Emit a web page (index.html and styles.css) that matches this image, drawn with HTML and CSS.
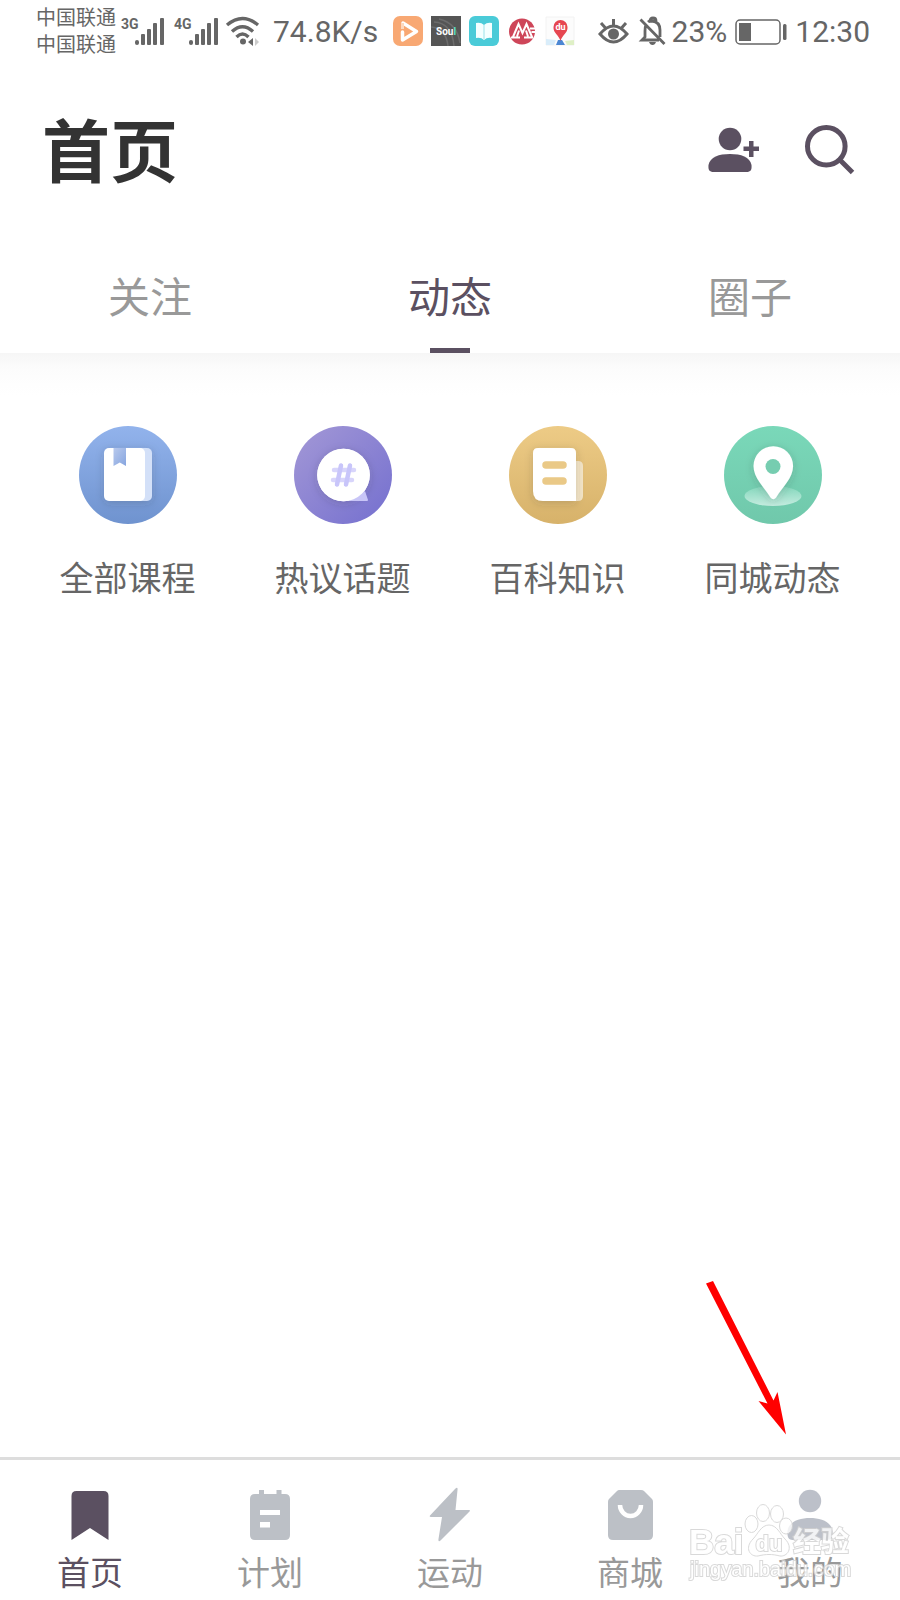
FILE: index.html
```html
<!DOCTYPE html>
<html lang="zh-CN">
<head>
<meta charset="utf-8">
<meta name="viewport" content="width=device-width, initial-scale=1">
<title>首页</title>
<link rel="stylesheet" href="styles.css">
</head>
<body>
<div class="app">
  <div class="status">
    <div class="status-group">
      <div class="carriers"><span>中国联通</span><span>中国联通</span></div>
      <svg class="signal" width="46" height="32" viewBox="0 0 46 32" fill="#666">
        <text class="net" x="0" y="13">3G</text>
        <rect x="14" y="24" width="4" height="5" rx="2"/><rect x="20" y="18" width="4" height="11" rx="1"/><rect x="26" y="13" width="4" height="16" rx="1"/><rect x="32" y="7" width="4" height="22" rx="1"/><rect x="39" y="2" width="4" height="27" rx="1"/>
      </svg>
      <svg class="signal" width="46" height="32" viewBox="0 0 46 32" fill="#666">
        <text class="net" x="0" y="13">4G</text>
        <rect x="15" y="24" width="4" height="5" rx="2"/><rect x="21" y="18" width="4" height="11" rx="1"/><rect x="27" y="13" width="4" height="16" rx="1"/><rect x="33" y="7" width="4" height="22" rx="1"/><rect x="40" y="2" width="4" height="27" rx="1"/>
      </svg>
      <svg width="34" height="32" viewBox="0 0 34 32" fill="none" stroke="#666" stroke-width="3.4">
        <path d="M0 9Q15.500 -4 31 9M5 15.500Q15.500 6 26 15.500M9.500 21Q15.500 15 21.500 21"/>
        <circle cx="16" cy="25.500" r="3" fill="#666" stroke="none"/>
        <path d="M21 26l5-4v8z" fill="#666" stroke="none"/><path d="M28 22l4 4-4 4z" fill="#ccc" stroke="none"/>
      </svg>
    </div>
    <span class="status-text">74.8K/s</span>
    <div class="apps">
      <svg width="30" height="30" viewBox="0 0 30 30"><rect width="30" height="30" rx="7" fill="#f8a873"/><path d="M9.500 16v8l14-8.500L10 7" fill="none" stroke="#fff" stroke-width="3.500" stroke-linejoin="round" stroke-linecap="round"/><path d="M9.500 7v6" stroke="#fdd9bf" stroke-width="3"/></svg>
      <svg width="30" height="30" viewBox="0 0 30 30"><rect width="30" height="30" fill="#555"/><path d="M3 6q18 1 20 24M8 3q18 4 21 24M0 11q15 1 17 19" fill="none" stroke="#6c6c6c" stroke-width="1.500"/><text class="soul" x="5" y="19">Sou<tspan fill="#55e0c5">l</tspan></text></svg>
      <svg width="30" height="30" viewBox="0 0 30 30"><rect width="30" height="30" rx="6" fill="#4acbd8"/><path d="M7 7q5-1 8 2 3-3 8-2v15q-5-1-8 2-3-3-8-2z" fill="#f4ffff"/><path d="M15 9v14" stroke="#9be2e9"/></svg>
      <svg width="30" height="30" viewBox="0 0 30 30"><circle cx="15" cy="15.500" r="13" fill="#ce4659"/><path d="M6 21L11.500 8l4 9 4-9L25 21M10 20.500l2-6M21 20.500l-2-6M4 21.500h9M17 21.500h9M23 12.500h5M24.500 16h4" fill="none" stroke="#fff" stroke-width="2"/></svg>
      <svg width="30" height="30" viewBox="0 0 30 30"><path d="M1 1h28v28H1z" fill="#fcfcfc" stroke="#f2f2f2"/><path d="M1 23l10 1-2 5H1z" fill="#d9edfa"/><path d="M20 25l9-1v5h-7z" fill="#dff0c6"/><path d="M11 29l2-5h4l3 5z" fill="#4b87d3"/><path d="M15.500 25C14 19 8 17 8.500 11a7 7 0 0 1 14 0c.5 6-5.500 8-7 14z" fill="#e64650"/><text class="du-mini" x="15.500" y="14" text-anchor="middle">du</text></svg>
    </div>
    <div class="status-right">
      <svg class="eye" width="31" height="30" viewBox="0 0 31 30" fill="none" stroke="#666" stroke-width="3"><path d="M2 17Q15.500 1 29 17 15.500 33 2 17zM15.500 8V2M7.500 11L3 6M23.500 11L28 6"/><circle cx="15.500" cy="17" r="5.500" fill="#666" stroke="none"/></svg>
      <svg width="27" height="30" viewBox="0 0 27 30" fill="none" stroke="#666" stroke-width="2.800"><path d="M1.500 2.500L25.500 27M7 8q-1 2-1 6v6l-3 3h17M9 5q1-1 4-1 8 1 8 9v7M11 4q0-3 3-3t3 3"/><path d="M10 25h7q-1 3-3.500 3T10 25z" fill="#666" stroke="none"/></svg>
      <span class="status-text">23%</span>
      <svg class="battery" width="52" height="26" viewBox="0 0 52 26"><rect x="1" y="1" width="44" height="24" rx="4" fill="none" stroke="#666" stroke-width="1.500"/><rect x="4" y="4" width="12" height="18" fill="#666"/><rect x="48" y="5" width="3.500" height="16" rx="1.500" fill="#666"/></svg>
      <span class="status-text">12:30</span>
    </div>
  </div>

  <header class="header">
    <h1 class="title">首页</h1>
    <div class="actions">
      <button class="icon-btn" aria-label="添加好友"><svg width="52" height="50" viewBox="0 0 52 50" fill="#5b5061"><circle cx="22" cy="13" r="11.300"/><path d="M0.500 39C2 31 11 28 22 28s20 3 21.500 11c.5 5-1 7-5 7h-33c-4 0-5.500-2-5-7z"/><path d="M41 15h4.500v5.500h5.500V25h-5.500v6H41v-6h-5.500v-4.500H41z"/></svg></button>
      <button class="icon-btn" aria-label="搜索"><svg width="50" height="50" viewBox="0 0 50 50" fill="none" stroke="#5b5061"><circle cx="21.300" cy="20.300" r="18.800" stroke-width="5"/><path d="M34.500 33.500L47.500 46.500" stroke-width="5"/></svg></button>
    </div>
  </header>

  <nav class="tabs">
    <a class="tab" href="#follow">关注</a>
    <a class="tab active" href="#feed">动态</a>
    <a class="tab" href="#circle">圈子</a>
  </nav>

  <main class="content">
    <div class="shortcuts">
      <a class="shortcut" href="#courses">
        <svg width="98" height="98" viewBox="0 0 98 98">
          <defs><linearGradient id="blue" x2="0" y2="1"><stop stop-color="#92b3ec"/><stop offset="1" stop-color="#6f93cf"/></linearGradient><linearGradient id="ribbon" x2="1" y2="1"><stop stop-color="#b8c9ed"/><stop offset="1" stop-color="#86a5df"/></linearGradient><filter id="soft" x="-30%" y="-30%" width="160%" height="160%"><feDropShadow dx="0" dy="2" stdDeviation="4" flood-color="#333" flood-opacity=".2"/></filter></defs>
          <circle cx="49" cy="49" r="49" fill="url(#blue)"/>
          <g filter="url(#soft)"><rect x="40" y="22" width="33" height="53" rx="5" fill="#d3e0f8"/><rect x="25" y="22" width="41" height="53" rx="5" fill="#fff"/></g>
          <path d="M34.500 22h12.500v18l-6.200-3.500-6.300 3.500z" fill="url(#ribbon)"/>
        </svg><span>全部课程</span></a>
      <a class="shortcut" href="#topics">
        <svg width="98" height="98" viewBox="0 0 98 98">
          <defs><linearGradient id="violet" x2="1" y2="1"><stop stop-color="#a398d6"/><stop offset="1" stop-color="#746fcf"/></linearGradient></defs>
          <circle cx="49" cy="49" r="49" fill="url(#violet)"/>
          <circle cx="49.500" cy="49" r="26.300" fill="#fff" filter="url(#soft)"/><path d="M55 74.500L71 65l3 9q0 1-1 1H56z" fill="#c8c5f7"/><circle cx="49.500" cy="49" r="26.300" fill="#fff"/>
          <g fill="none" stroke-width="4.500" stroke-linecap="round"><path d="M40 44h20M39 54h19" stroke="#d8d5fb"/><path d="M47 39.500l-4 19M56 39.500l-4 19" stroke="#c8c5fa"/></g>
        </svg><span>热议话题</span></a>
      <a class="shortcut" href="#wiki">
        <svg width="98" height="98" viewBox="0 0 98 98">
          <defs><linearGradient id="gold" x2="0" y2="1"><stop stop-color="#edcb86"/><stop offset="1" stop-color="#d7b26a"/></linearGradient></defs>
          <circle cx="49" cy="49" r="49" fill="url(#gold)"/>
          <path d="M62 35h7q5 0 5 5v30q0 5-5 5h-7z" fill="#f3e4c6"/>
          <path d="M29 22h33q5 0 5 5v48H34q-10 0-10-10V27q0-5 5-5z" fill="#fff" filter="url(#soft)"/>
          <path d="M37 39h17M37 55h17" stroke="#eac987" stroke-width="7.500" stroke-linecap="round"/>
        </svg><span>百科知识</span></a>
      <a class="shortcut" href="#nearby">
        <svg width="98" height="98" viewBox="0 0 98 98">
          <defs><linearGradient id="green" x2="0" y2="1"><stop stop-color="#7ad8b9"/><stop offset="1" stop-color="#70c8ab"/></linearGradient><linearGradient id="pool" x2="0" y2="1"><stop stop-color="#84d7bc"/><stop offset="1" stop-color="#c4ecdf"/></linearGradient></defs>
          <circle cx="49" cy="49" r="49" fill="url(#green)"/>
          <ellipse cx="49" cy="70" rx="28.500" ry="10" fill="url(#pool)"/>
          <path d="M46.500 71.500C40 61 29.500 52 29.500 40a19.800 19.800 0 0 1 39.600 0c0 12-10.500 21-17 31.500q-2.800 3.500-5.600 0z" fill="#fff" filter="url(#soft)"/><circle cx="49" cy="40.500" r="7.500" fill="#76cdb0"/>
        </svg><span>同城动态</span></a>
    </div>
    <svg class="arrow" width="90" height="160" viewBox="0 0 90 160" fill="#f00"><path d="M7 2.500L14 0 74.500 119.500l4-8.500 8.500 42.500-27.500-33.500 9 2.500z"/></svg>
  </main>

  <nav class="bottom">
    <a class="item active" href="#home"><svg width="52" height="52" viewBox="0 0 52 52"><path d="M7.500 50V6q0-5 5-5h27q5 0 5 5v44L26 38z" fill="#5b5061"/></svg><span>首页</span></a>
    <a class="item" href="#plan"><svg width="52" height="52" viewBox="0 0 52 52"><path d="M15 0h5v4h12.500V0h5v4h3.500q5 0 5 5v36q0 5-5 5H11q-5 0-5-5V9q0-5 5-5h4z" fill="#bcc0c6"/><path d="M16 20h20v5H16zM16 32h10v5.500H16z" fill="#fff"/></svg><span>计划</span></a>
    <a class="item" href="#sport"><svg width="52" height="52" viewBox="0 0 52 52"><path d="M31-1q3-3 2.500 1l-2 20H45q2 0 0 2L17 50q-3 3-2.500-1l3.500-22H7q-2 0-1-1.500z" fill="#bcc0c6"/></svg><span>运动</span></a>
    <a class="item" href="#mall"><svg width="52" height="52" viewBox="0 0 52 52"><path d="M15 0h22q2 0 3 1l8 8q1 1 1 3v33q0 5-5 5H9q-5 0-5-5V12q0-2 1-3l8-8q1-1 2-1z" fill="#bcc0c6"/><path d="M16 15a10.500 11 0 0 0 21 0" fill="none" stroke="#fff" stroke-width="4.500"/></svg><span>商城</span></a>
    <a class="item" href="#mine"><svg width="52" height="52" viewBox="0 0 52 52" fill="#bcc0c9"><circle cx="26" cy="11" r="11.200"/><path d="M3.500 41C5 31 16 28 26 28s21 3 22.500 13c.5 6-1 9-5 9h-35c-4 0-5.500-3-5-9z"/></svg><span>我的</span></a>
    <svg class="mark" width="168" height="84" viewBox="0 0 168 84" fill="#fff" stroke="#d0d0d0">
      <g><ellipse cx="63.500" cy="23" rx="6.500" ry="8.500"/><ellipse cx="75" cy="12" rx="6.500" ry="8.500"/><ellipse cx="89" cy="13" rx="6.500" ry="8.500"/><ellipse cx="98" cy="25" rx="6.500" ry="8"/><path d="M81 24c8 0 11 9 16 14 9 9 2 18-5 17-8-2-14-2-22 0-8 1-14-8-5-17 5-5 8-14 16-14z"/></g>
      <text class="mark-big" x="1" y="53">Bai</text>
      <text class="mark-du" x="81" y="50" text-anchor="middle">du</text>
      <text class="mark-cn" x="105" y="51">经验</text>
      <text class="mark-url" x="2" y="75">jingyan.baidu.com</text>
    </svg>
  </nav>
</div>
</body>
</html>
```

FILE: styles.css
```css
* { box-sizing: border-box; }

body {
  margin: 0;
  background: #fff;
  font-family: Roboto, "Noto Sans CJK SC", sans-serif;
  color: #666;
}

svg { display: block; flex: none; overflow: visible; }
a { color: inherit; text-decoration: none; }

.app { display: flex; flex-direction: column; min-height: 100vh; }

/* status bar */
.status { display: flex; align-items: center; height: 62px; padding: 2px 30px 0 36px; }
.status-group { display: flex; align-items: center; gap: 7px; }
.carriers { display: flex; flex-direction: column; margin-right: -2px; font-size: 20px; line-height: 27px; }
.net { font: bold 14px Roboto, sans-serif; }
.status-text { font-size: 30px; line-height: 40px; }
.status-group + .status-text { margin-left: 12px; }
.apps { display: flex; gap: 8px; margin: 0 0 2px 15px; }
.soul { font: bold 10px Roboto, sans-serif; fill: #fff; }
.du-mini { font: bold 9px Roboto, sans-serif; fill: #fff; }
.status-right { display: flex; align-items: center; gap: 8px; margin-left: auto; }
.status-right svg + .status-text { margin-left: -2px; }
.status-right .battery + .status-text { margin-left: 0; }
.eye { margin-right: 2px; }

/* title row */
.header { display: flex; align-items: center; justify-content: space-between; height: 178px; padding: 0 45px 0 42px; }
.title { margin: 0; padding-top: 6px; font-size: 68px; line-height: 100px; font-weight: 700; color: #333; }
.actions { display: flex; gap: 45px; }
.icon-btn { padding: 0; border: 0; background: none; }

/* tabs */
.tabs { display: grid; grid-template-columns: repeat(3, 1fr); }
.tab { display: flex; flex-direction: column; align-items: center; height: 113px; padding-top: 29px; font-size: 42px; line-height: 60px; color: #999; }
.tab.active { color: #5b5061; }
.tab.active::after { content: ""; width: 40px; height: 5px; margin-top: auto; background: #5b5061; }

/* content */
.content { position: relative; flex: 1; background: linear-gradient(#f6f6f6, #fcfcfc 16px, #fefefe 32px, #fff 44px); }
.shortcuts { display: grid; grid-template-columns: repeat(4, 1fr); padding: 73px 20px 0; }
.shortcut { display: flex; flex-direction: column; align-items: center; gap: 31px; font-size: 34px; line-height: 48px; }
.arrow { position: absolute; right: 111px; bottom: 16px; }

/* bottom navigation */
.bottom { position: relative; display: grid; grid-template-columns: repeat(5, 1fr); height: 143px; border-top: 3px solid #ddd; }
.item { display: flex; flex-direction: column; align-items: center; gap: 8px; padding-top: 30px; font-size: 33px; line-height: 48px; color: #999; }
.item.active { color: #5b5061; }
.mark { position: absolute; right: 44px; bottom: 15px; pointer-events: none; opacity: 0.8; }
.mark text { paint-order: stroke; stroke-width: 2px; }
.mark-big { font: bold 35px "Liberation Sans", sans-serif; }
.mark-du { font: bold 22px "Liberation Sans", sans-serif; }
.mark-cn { font: bold 28px "Noto Sans CJK SC", sans-serif; }
.mark-url { font: 20px "Liberation Sans", sans-serif; }
```
